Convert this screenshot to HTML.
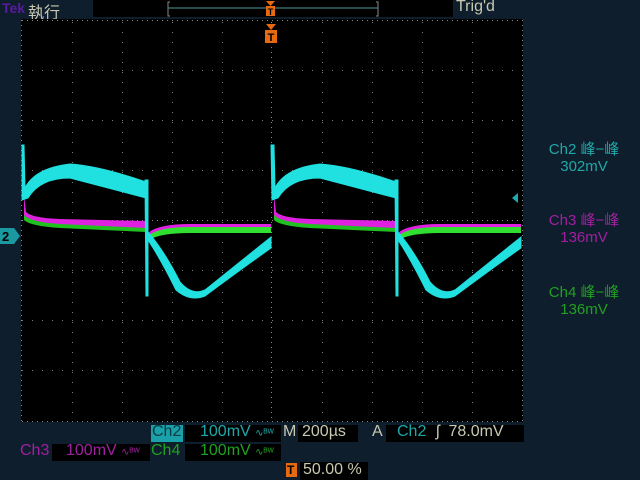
<!DOCTYPE html>
<html><head><meta charset="utf-8"><style>
body{margin:0;width:640px;height:480px;background:#0f1e2d;overflow:hidden;position:relative;font-family:"Liberation Sans","Noto Sans CJK SC",sans-serif}
.t{position:absolute;font-size:15px;white-space:nowrap}
.box{position:absolute;background:#000}
</style></head><body>
<div class="t" style="left:2px;top:0;color:#5a1aa0;font-weight:bold;font-size:14px">Tek</div>
<div class="t" style="left:28px;top:-1px;color:#c8c8b0;font-size:16px">執行</div>
<div class="box" style="left:93px;top:0;width:360px;height:17px"></div>
<svg style="position:absolute;left:0;top:0" width="640" height="480">
<line x1="168" y1="8" x2="378" y2="8" stroke="#4a9a9a" stroke-width="1"/>
<path d="M170 2h-2v14h2M376 2h2v14h-2" stroke="#888" fill="none"/>
<rect x="266" y="6" width="9" height="10" fill="#e86a10"/>
<path d="M266 1h9l-4.5 5z" fill="#e86a10"/>
<text x="270.5" y="15" fill="#000" font-size="9" font-weight="bold" text-anchor="middle" font-family="Liberation Sans">T</text>
</svg>
<div class="t" style="left:456px;top:-2px;color:#c8c8b0;font-size:16px">Trig'd</div>
<svg style="position:absolute;left:0;top:0" width="640" height="480">
<rect x="21" y="19" width="502" height="403" fill="#000"/>
<g stroke="#8a8a8a" stroke-width="1" stroke-dasharray="1 4" fill="none">
<path d="M22 20.5H522M22 421.5H522M21.5 20V422M522.5 20V422"/>
</g>
<g stroke="#7a7a7a" stroke-width="1" stroke-dasharray="1 9" fill="none">
<path d="M72.5 22V420M122.5 22V420M172.5 22V420M222.5 22V420M322.5 22V420M372.5 22V420M422.5 22V420M472.5 22V420"/>
<path d="M22 70.5H522M22 120.5H522M22 170.5H522M22 270.5H522M22 320.5H522M22 370.5H522"/>
</g>
<g stroke="#8a8a8a" stroke-width="1" stroke-dasharray="1 4" fill="none">
<path d="M271.5 22V420M22 220.5H522"/>
</g>
<path d="M266 24h10l-5 6z" fill="#e86a10"/>
<rect x="265" y="30" width="12" height="13" fill="#e86a10"/>
<text x="271" y="41" fill="#000" font-size="11" font-weight="bold" text-anchor="middle" font-family="Liberation Sans">T</text>
<g>
<path d="M24 200 L26 215 Q32 222 60 223 L146 226 L146 232 L60 228 Q30 226 24 220Z" fill="#20c020"/>
<path d="M24 195 L26 212 Q32 218 60 219 L146 221 L146 228 L60 224 Q30 222 24 215Z" fill="#e020e0"/>
<path d="M149 232 Q160 224 190 224 L271 224 L271 231 L190 229 Q160 229 149 238Z" fill="#e020e0"/>
<path d="M149 235 Q160 227 190 227 L271 227 L271 233 L190 233 Q160 233 149 240Z" fill="#30e030"/>
<path d="M274 200 L276 215 Q282 222 310 223 L396 226 L396 232 L310 228 Q280 226 274 220Z" fill="#20c020"/>
<path d="M274 195 L276 212 Q282 218 310 219 L396 221 L396 228 L310 224 Q280 222 274 215Z" fill="#e020e0"/>
<path d="M399 232 Q410 224 440 224 L521 224 L521 231 L440 229 Q410 229 399 238Z" fill="#e020e0"/>
<path d="M399 235 Q410 227 440 227 L521 227 L521 233 L440 233 Q410 233 399 240Z" fill="#30e030"/>
</g>
<g fill="#20e0e0" stroke="#20e0e0" stroke-width="1">
<path d="M22 145 L24 145 L25 188 Q35 168 70 164 Q100 166 146 182 L146 198 Q100 186 70 178 Q40 178 28 198 L22 200Z"/>
<path d="M145 180 L148 180 L148 296 L146 296Z"/>
<path d="M148 232 Q165 252 180 282 Q192 296 205 290 Q240 262 271 237 L271 248 Q240 270 205 296 Q190 302 176 290 Q160 258 148 240Z"/>
<path d="M271 145 L274 145 L275 188 Q285 168 320 164 Q350 166 396 182 L396 198 Q350 186 320 178 Q290 178 278 198 L272 200Z"/>
<path d="M395 180 L398 180 L398 296 L396 296Z"/>
<path d="M398 232 Q415 252 430 282 Q442 296 455 290 Q490 262 521 237 L521 248 Q490 270 455 296 Q440 302 426 290 Q410 258 398 240Z"/>
</g>
<path d="M0 228h14l6 8l-6 8H0z" fill="#1a9aa0"/>
<text x="2" y="241" fill="#000" font-size="13" font-weight="bold" font-family="Liberation Sans">2</text>
<path d="M512 198l6-5v10z" fill="#20a8b0"/>
</svg>
<div class="t" style="left:540px;top:141px;color:#1fa8a8;line-height:17px;text-align:center;width:88px">Ch2 峰−峰<br>302mV</div>
<div class="t" style="left:540px;top:212px;color:#a020a0;line-height:17px;text-align:center;width:88px">Ch3 峰−峰<br>136mV</div>
<div class="t" style="left:540px;top:284px;color:#20a020;line-height:17px;text-align:center;width:88px">Ch4 峰−峰<br>136mV</div>
<div class="box" style="left:151px;top:425px;width:32px;height:17px;background:#1aa0a8"></div>
<div class="t" style="left:152px;top:423px;color:#0a3a40;font-size:16px">Ch2</div>
<div class="box" style="left:185px;top:425px;width:96px;height:17px"></div>
<div class="t" style="left:200px;top:423px;color:#1fa8a8;font-size:16px">100mV <span style="font-size:10px">∿ᴮᵂ</span></div>
<div class="t" style="left:283px;top:423px;color:#c8c8b0;font-size:16px">M</div>
<div class="box" style="left:298px;top:425px;width:60px;height:17px"></div>
<div class="t" style="left:302px;top:423px;color:#c8c8b0;font-size:16px">200µs</div>
<div class="t" style="left:372px;top:423px;color:#c8c8b0;font-size:16px">A</div>
<div class="box" style="left:386px;top:425px;width:138px;height:17px"></div>
<div class="t" style="left:397px;top:423px;color:#1fa8a8;font-size:16px">Ch2</div>
<div class="t" style="left:436px;top:423px;color:#c8c8b0;font-size:16px">ʃ&nbsp; 78.0mV</div>
<div class="t" style="left:20px;top:442px;color:#a020a0;font-size:16px">Ch3</div>
<div class="box" style="left:52px;top:444px;width:98px;height:17px"></div>
<div class="t" style="left:66px;top:442px;color:#a020a0;font-size:16px">100mV <span style="font-size:10px">∿ᴮᵂ</span></div>
<div class="t" style="left:151px;top:442px;color:#20a020;font-size:16px">Ch4</div>
<div class="box" style="left:185px;top:444px;width:96px;height:17px"></div>
<div class="t" style="left:200px;top:442px;color:#20a020;font-size:16px">100mV <span style="font-size:10px">∿ᴮᵂ</span></div>
<div class="box" style="left:286px;top:463px;width:11px;height:14px;background:#e86a10"></div>
<div class="t" style="left:287px;top:463px;color:#000;font-size:12px;font-weight:bold">T</div>
<div class="box" style="left:300px;top:462px;width:68px;height:18px"></div>
<div class="t" style="left:303px;top:461px;color:#c8c8b0;font-size:16px">50.00 %</div>
</body></html>
